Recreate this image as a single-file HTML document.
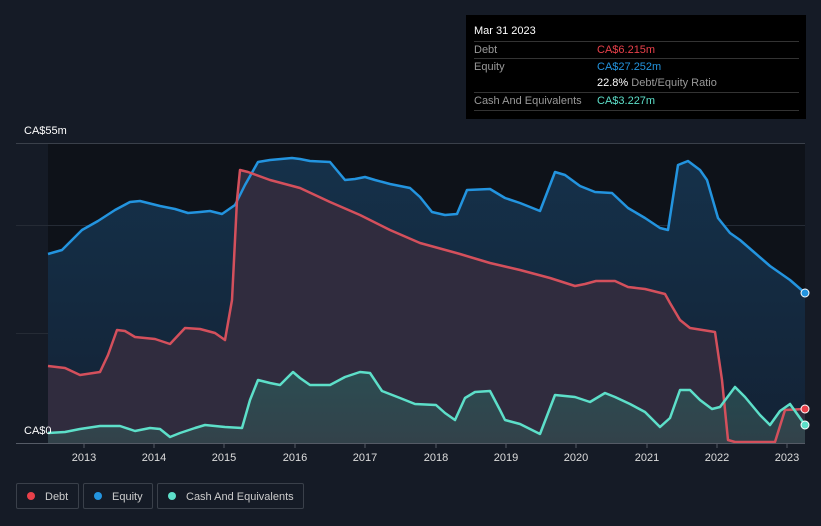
<!DOCTYPE html><html><head><meta charset="utf-8"><style>
body{margin:0;width:821px;height:526px;background:#151b26;font-family:"Liberation Sans",sans-serif;overflow:hidden;position:relative}
.t{position:absolute;font-size:11px;color:#fff}
.tt{position:absolute;left:466px;top:15px;width:340px;height:104px;background:#000;}
.tt .r{position:absolute;left:8px;width:325px;border-top:1px solid #333;font-size:11px;color:#999;height:17px;line-height:17px}
.lg{position:absolute;top:483px;height:26px;border:1px solid #3a404a;border-radius:2px;color:#ccc;font-size:11px;line-height:26px;box-sizing:border-box}
.lg i{display:inline-block;width:8px;height:8px;border-radius:50%;margin:0 10px 0 10px;vertical-align:-0px}
</style></head><body>
<svg width="821" height="526" style="position:absolute;left:0;top:0">
<defs>
<linearGradient id="ge" x1="0" y1="0" x2="0" y2="1"><stop offset="0" stop-color="#15314a"/><stop offset="1" stop-color="#132235"/></linearGradient>
<linearGradient id="gc" x1="0" y1="0" x2="0" y2="1"><stop offset="0" stop-color="#2a5a5a" stop-opacity=".7"/><stop offset="1" stop-color="#33474d" stop-opacity=".8"/></linearGradient>
</defs>
<rect x="48" y="143" width="757" height="300" fill="#0e1219"/>
<line x1="16" y1="143.5" x2="805" y2="143.5" stroke="#3a404a"/>
<line x1="16" y1="225.5" x2="805" y2="225.5" stroke="#252b35"/>
<line x1="16" y1="333.5" x2="805" y2="333.5" stroke="#252b35"/>
<path id="eq" fill="url(#ge)" d="M48,443 L48,254 L62,250 L70,242 L82,230 L98,221 L115,210 L130,202 L140,201 L160,206 L175,209 L188,213 L200,212 L210,211 L222,214 L235,205 L245,185 L258,162 L270,160 L292,158 L300,159 L310,161 L330,162 L345,180 L355,179 L365,177 L375,180 L390,184 L410,188 L420,197 L432,212 L445,215 L457,214 L467,190 L490,189 L505,198 L520,203 L540,211 L555,172 L565,175 L580,186 L595,192 L612,193 L628,208 L645,218 L660,228 L668,230 L678,165 L688,161 L700,170 L707,180 L718,218 L730,233 L740,240 L755,253 L770,266 L790,280 L805,293 L805,443Z"/>
<path fill="#302c3e" d="M48,443 L48,366 L65,368 L80,375 L100,372 L108,355 L117,330 L125,331 L135,337 L155,339 L170,344 L185,328 L200,329 L215,333 L225,340 L232,300 L237,200 L240,170 L248,172 L270,180 L300,188 L330,202 L360,215 L390,230 L420,243 L460,254 L490,263 L520,270 L550,278 L575,286 L585,284 L596,281 L615,281 L628,287 L645,289 L665,294 L670,303 L680,320 L690,328 L715,332 L722,380 L728,440 L735,442 L775,442 L785,410 L805,409 L805,443Z"/>
<path fill="url(#gc)" d="M48,443 L48,433 L65,432 L80,429 L100,426 L120,426 L135,431 L150,428 L160,429 L170,437 L180,433 L195,428 L205,425 L225,427 L242,428 L250,400 L258,380 L270,383 L280,385 L293,372 L300,378 L310,385 L330,385 L345,377 L360,372 L370,373 L382,391 L400,398 L415,404 L436,405 L445,413 L455,420 L465,398 L475,392 L490,391 L500,410 L505,420 L520,424 L540,434 L555,395 L575,397 L590,402 L605,393 L615,397 L630,404 L645,412 L660,427 L670,418 L680,390 L690,390 L700,400 L712,409 L720,407 L735,387 L745,397 L760,415 L770,425 L780,411 L790,404 L805,425 L805,443Z"/>
<g fill="none" stroke-width="2.5" stroke-linejoin="round">
<path stroke="#2394df" d="M48,254 L62,250 L70,242 L82,230 L98,221 L115,210 L130,202 L140,201 L160,206 L175,209 L188,213 L200,212 L210,211 L222,214 L235,205 L245,185 L258,162 L270,160 L292,158 L300,159 L310,161 L330,162 L345,180 L355,179 L365,177 L375,180 L390,184 L410,188 L420,197 L432,212 L445,215 L457,214 L467,190 L490,189 L505,198 L520,203 L540,211 L555,172 L565,175 L580,186 L595,192 L612,193 L628,208 L645,218 L660,228 L668,230 L678,165 L688,161 L700,170 L707,180 L718,218 L730,233 L740,240 L755,253 L770,266 L790,280 L805,293"/>
<path stroke="#d4505c" d="M48,366 L65,368 L80,375 L100,372 L108,355 L117,330 L125,331 L135,337 L155,339 L170,344 L185,328 L200,329 L215,333 L225,340 L232,300 L237,200 L240,170 L248,172 L270,180 L300,188 L330,202 L360,215 L390,230 L420,243 L460,254 L490,263 L520,270 L550,278 L575,286 L585,284 L596,281 L615,281 L628,287 L645,289 L665,294 L670,303 L680,320 L690,328 L715,332 L722,380 L728,440 L735,442 L775,442 L785,410 L805,409"/>
<path stroke="#5ddfc9" d="M48,433 L65,432 L80,429 L100,426 L120,426 L135,431 L150,428 L160,429 L170,437 L180,433 L195,428 L205,425 L225,427 L242,428 L250,400 L258,380 L270,383 L280,385 L293,372 L300,378 L310,385 L330,385 L345,377 L360,372 L370,373 L382,391 L400,398 L415,404 L436,405 L445,413 L455,420 L465,398 L475,392 L490,391 L500,410 L505,420 L520,424 L540,434 L555,395 L575,397 L590,402 L605,393 L615,397 L630,404 L645,412 L660,427 L670,418 L680,390 L690,390 L700,400 L712,409 L720,407 L735,387 L745,397 L760,415 L770,425 L780,411 L790,404 L805,425"/>
</g>
<circle cx="805" cy="293" r="4" fill="#2394df" stroke="#fff" stroke-width="1"/>
<circle cx="805" cy="409" r="4" fill="#e8404a" stroke="#fff" stroke-width="1"/>
<circle cx="805" cy="425" r="4" fill="#5ddfc9" stroke="#fff" stroke-width="1"/>
<line x1="16" y1="443.5" x2="805" y2="443.5" stroke="#555b66"/>
<g stroke="#555b66"><line x1="84" y1="443" x2="84" y2="448"/><line x1="154" y1="443" x2="154" y2="448"/><line x1="224" y1="443" x2="224" y2="448"/><line x1="295" y1="443" x2="295" y2="448"/><line x1="365" y1="443" x2="365" y2="448"/><line x1="436" y1="443" x2="436" y2="448"/><line x1="506" y1="443" x2="506" y2="448"/><line x1="576" y1="443" x2="576" y2="448"/><line x1="647" y1="443" x2="647" y2="448"/><line x1="717" y1="443" x2="717" y2="448"/><line x1="787" y1="443" x2="787" y2="448"/></g>
<g fill="#ddd" font-size="11" text-anchor="middle" font-family="Liberation Sans"><text x="84" y="461">2013</text><text x="154" y="461">2014</text><text x="224" y="461">2015</text><text x="295" y="461">2016</text><text x="365" y="461">2017</text><text x="436" y="461">2018</text><text x="506" y="461">2019</text><text x="576" y="461">2020</text><text x="647" y="461">2021</text><text x="717" y="461">2022</text><text x="787" y="461">2023</text></g>
</svg>
<div class="t" style="left:24px;top:125px">CA$55m</div>
<div class="t" style="left:24px;top:425px">CA$0</div>
<div class="tt">
<div style="position:absolute;left:8px;top:10px;color:#fff;font-size:11px">Mar 31 2023</div>
<div class="r" style="top:26px">Debt<span style="position:absolute;left:123px;color:#e8404a">CA$6.215m</span></div>
<div class="r" style="top:43px">Equity<span style="position:absolute;left:123px;color:#2394df">CA$27.252m</span></div>
<div class="r" style="top:60px;border:none"><span style="position:absolute;left:123px;color:#999"><b style="color:#fff;font-weight:normal">22.8%</b> Debt/Equity Ratio</span></div>
<div class="r" style="top:77px">Cash And Equivalents<span style="position:absolute;left:123px;color:#5ddfc9">CA$3.227m</span></div>
<div class="r" style="top:95px;height:0"></div>
</div>
<div class="lg" style="left:16px;width:63px"><i style="background:#e8404a"></i>Debt</div>
<div class="lg" style="left:83px;width:70px"><i style="background:#2394df"></i>Equity</div>
<div class="lg" style="left:157px;width:147px"><i style="background:#5ddfc9"></i>Cash And Equivalents</div>
</body></html>
